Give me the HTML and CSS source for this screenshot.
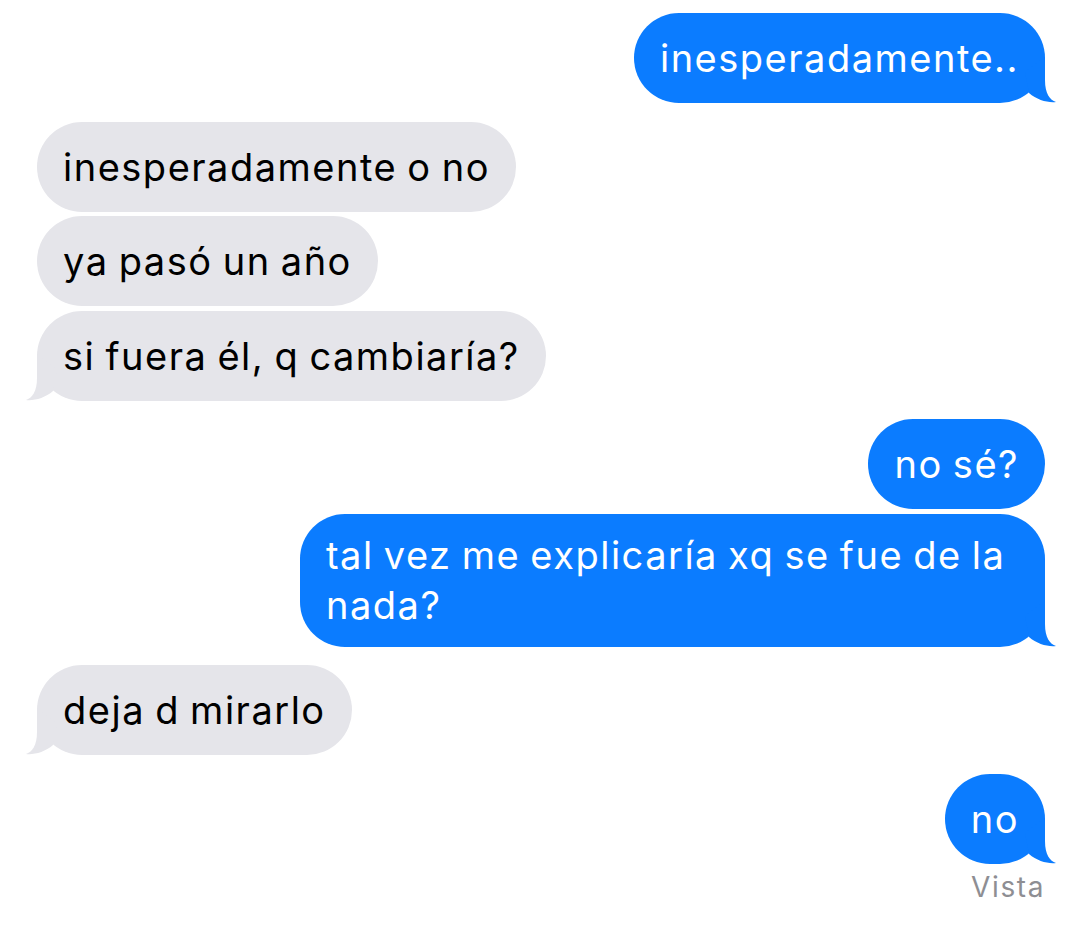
FILE: index.html
```html
<!DOCTYPE html>
<html lang="es">
<head>
<meta charset="utf-8">
<link rel="stylesheet" href="styles.css">
</head>
<body>
<div class="chat">
  <div class="msg sent first"><span class="text">inesperadamente..</span><svg class="tail" viewBox="-20 -45 32 46"><path d="M0 -45 L0 -22 C0 -8 5 -2 11 0 C3 1 -8 -2 -16 -9 L-20 -30 Z"/></svg></div>
  <div class="msg recv gap-big"><span class="text">inesperadamente o no</span></div>
  <div class="msg recv gap-small"><span class="text">ya pasó un año</span></div>
  <div class="msg recv gap-small"><span class="text">si fuera él, q cambiaría?</span><svg class="tail" viewBox="-12 -45 32 46"><path d="M0 -45 L0 -22 C0 -8 -5 -2 -11 0 C-3 1 8 -2 16 -9 L20 -30 Z"/></svg></div>
  <div class="msg sent gap-big"><span class="text">no sé?</span></div>
  <div class="msg sent gap-small"><span class="text">tal vez me explicaría xq se fue de la nada?</span><svg class="tail" viewBox="-20 -45 32 46"><path d="M0 -45 L0 -22 C0 -8 5 -2 11 0 C3 1 -8 -2 -16 -9 L-20 -30 Z"/></svg></div>
  <div class="msg recv gap-big"><span class="text">deja d mirarlo</span><svg class="tail" viewBox="-12 -45 32 46"><path d="M0 -45 L0 -22 C0 -8 -5 -2 -11 0 C-3 1 8 -2 16 -9 L20 -30 Z"/></svg></div>
  <div class="msg sent gap-big"><span class="text">no</span><svg class="tail" viewBox="-20 -45 32 46"><path d="M0 -45 L0 -22 C0 -8 5 -2 11 0 C3 1 -8 -2 -16 -9 L-20 -30 Z"/></svg></div>
  <div class="status">Vista</div>
</div>
</body>
</html>
```
FILE: styles.css
```css
html, body {
  margin: 0;
  padding: 0;
  background: #ffffff;
}
.chat {
  display: flex;
  flex-direction: column;
  padding: 0 35px 0 37px;
  font-family: Inter, "Liberation Sans", sans-serif;
}
.msg {
  position: relative;
  display: flex;
  align-items: center;
  max-width: 745px;
  min-height: 90px;
  box-sizing: border-box;
  padding: 16.5px 26px;
  font-size: 38px;
  line-height: 50px;
  letter-spacing: 1.5px;
  word-spacing: -2px;
  border-radius: 45px;
}
.text {
  display: block;
}
.first { margin-top: 13px; }
.gap-big { margin-top: 18.5px; }
.gap-small { margin-top: 4.5px; }
.sent {
  align-self: flex-end;
  background: #0b7cff;
  color: #ffffff;
}
.recv {
  align-self: flex-start;
  background: #e5e5ea;
  color: #000000;
}
.tail {
  position: absolute;
  bottom: 0;
  width: 32px;
  height: 46px;
}
.sent .tail {
  right: -12px;
  fill: #0b7cff;
}
.recv .tail {
  left: -12px;
  fill: #e5e5ea;
}
.status {
  align-self: flex-end;
  margin-top: 6.5px;
  font-size: 28px;
  line-height: 34px;
  letter-spacing: 1.6px;
  color: #8e8e93;
}
```
